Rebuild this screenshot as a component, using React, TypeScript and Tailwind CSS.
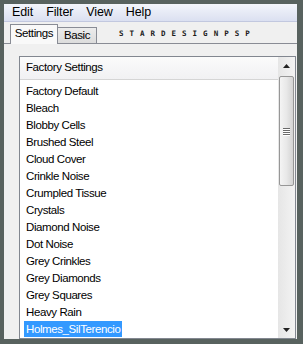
import React from "react";

const presets = [
    "Factory Default",
    "Bleach",
    "Blobby Cells",
    "Brushed Steel",
    "Cloud Cover",
    "Crinkle Noise",
    "Crumpled Tissue",
    "Crystals",
    "Diamond Noise",
    "Dot Noise",
    "Grey Crinkles",
    "Grey Diamonds",
    "Grey Squares",
    "Heavy Rain",
    "Holmes_SilTerencio",
];

const selected = "Holmes_SilTerencio";

function Arrow({ up }: { up?: boolean }) {
    return (
        <svg width="7" height="4" viewBox="0 0 7 4">
            <path d={up ? "M3.5 0 L7 4 L0 4 Z" : "M0 0 L7 0 L3.5 4 Z"} fill="#222" />
        </svg>
    );
}

function ScrollBar() {
    return (
        <div className="w-[17px] flex flex-col bg-gradient-to-r from-[#e6e6e6] to-[#f3f3f3]">
            <div className="h-[17px] flex items-center justify-center">
                <Arrow up />
            </div>
            <div className="flex-1 px-[1px] pt-[2px]">
                <div className="h-[110px] rounded-[2px] border border-[#979797] bg-gradient-to-r from-[#f4f4f4] via-[#e8e8e8] to-[#d4d4d4] flex flex-col items-center justify-center gap-[1px]">
                    <div className="w-[7px] h-[1px] bg-[#6a6a6a] shadow-[0_1px_0_#ffffff]" />
                    <div className="w-[7px] h-[1px] bg-[#6a6a6a] shadow-[0_1px_0_#ffffff]" />
                    <div className="w-[7px] h-[1px] bg-[#6a6a6a] shadow-[0_1px_0_#ffffff]" />
                    <div className="w-[7px] h-[1px] bg-[#6a6a6a] shadow-[0_1px_0_#ffffff]" />
                </div>
            </div>
            <div className="h-[17px] flex items-center justify-center">
                <Arrow />
            </div>
        </div>
    );
}

export default function App() {
    return (
        <div
            className="w-[303px] h-[344px] bg-[#58625f] pt-[4px] pl-[4px] pr-[6px] pb-[5px] overflow-hidden"
            style={{ fontFamily: '"Liberation Sans", Arial, sans-serif' }}
        >
            <div className="h-full bg-[#f0f0f0] flex flex-col overflow-hidden">
                {/* menu bar */}
                <div className="h-[18px] shrink-0 flex items-center pl-[8px] gap-[13px] text-[12.5px] tracking-[-0.1px] text-black bg-gradient-to-b from-[#f3f5fb] to-[#dbe0f1] border-b border-[#c2c8df]">
                    <span>Edit</span>
                    <span>Filter</span>
                    <span>View</span>
                    <span>Help</span>
                </div>

                {/* tabs */}
                <div className="h-[22px] shrink-0 flex items-end border-b border-[#898c95] text-[11.5px] tracking-[-0.4px]">
                    <div className="ml-[6px] w-[48px] h-[20px] -mb-[1px] bg-[#f9f9f9] border border-b-0 border-[#898c95] flex items-center justify-center pb-[1px] relative z-10">
                        Settings
                    </div>
                    <div className="-ml-[1px] w-[40px] h-[16px] bg-gradient-to-b from-[#ececec] to-[#dcdcdc] border border-b-0 border-[#898c95] flex items-center justify-center pt-[1px]">
                        Basic
                    </div>
                    <div
                        className="ml-[22px] mb-[6px] text-[7.5px] font-bold tracking-[6px] text-[#1a1a1a] leading-none"
                        style={{ fontFamily: '"DejaVu Sans Mono", "Liberation Mono", monospace' }}
                    >
                        STARDESIGNPSP
                    </div>
                </div>

                {/* panel */}
                <div className="flex-1 flex flex-col pl-[15px] pr-[1px] pt-[12px] min-h-0">
                    <div className="flex-1 min-h-0 flex bg-white border border-[#828790] overflow-hidden">
                        <div className="flex-1 flex flex-col text-[11.5px] tracking-[-0.4px] text-black">
                            <div className="h-[23px] shrink-0 flex items-center pl-[6px] bg-gradient-to-b from-[#fbfbfb] to-[#f1f1f3] border-b border-[#d5d5d5]">
                                Factory Settings
                            </div>
                            <div className="pt-[2px] pl-[4px]">
                                {presets.map((p) => (
                                    <div key={p} className="h-[17px] flex items-center">
                                        <span
                                            className={`px-[2px] h-[16px] leading-[16px] ${p === selected ? "bg-[#3399ff] text-white" : ""}`}
                                        >
                                            {p}
                                        </span>
                                    </div>
                                ))}
                            </div>
                        </div>
                        <ScrollBar />
                    </div>
                </div>
            </div>
        </div>
    );
}
